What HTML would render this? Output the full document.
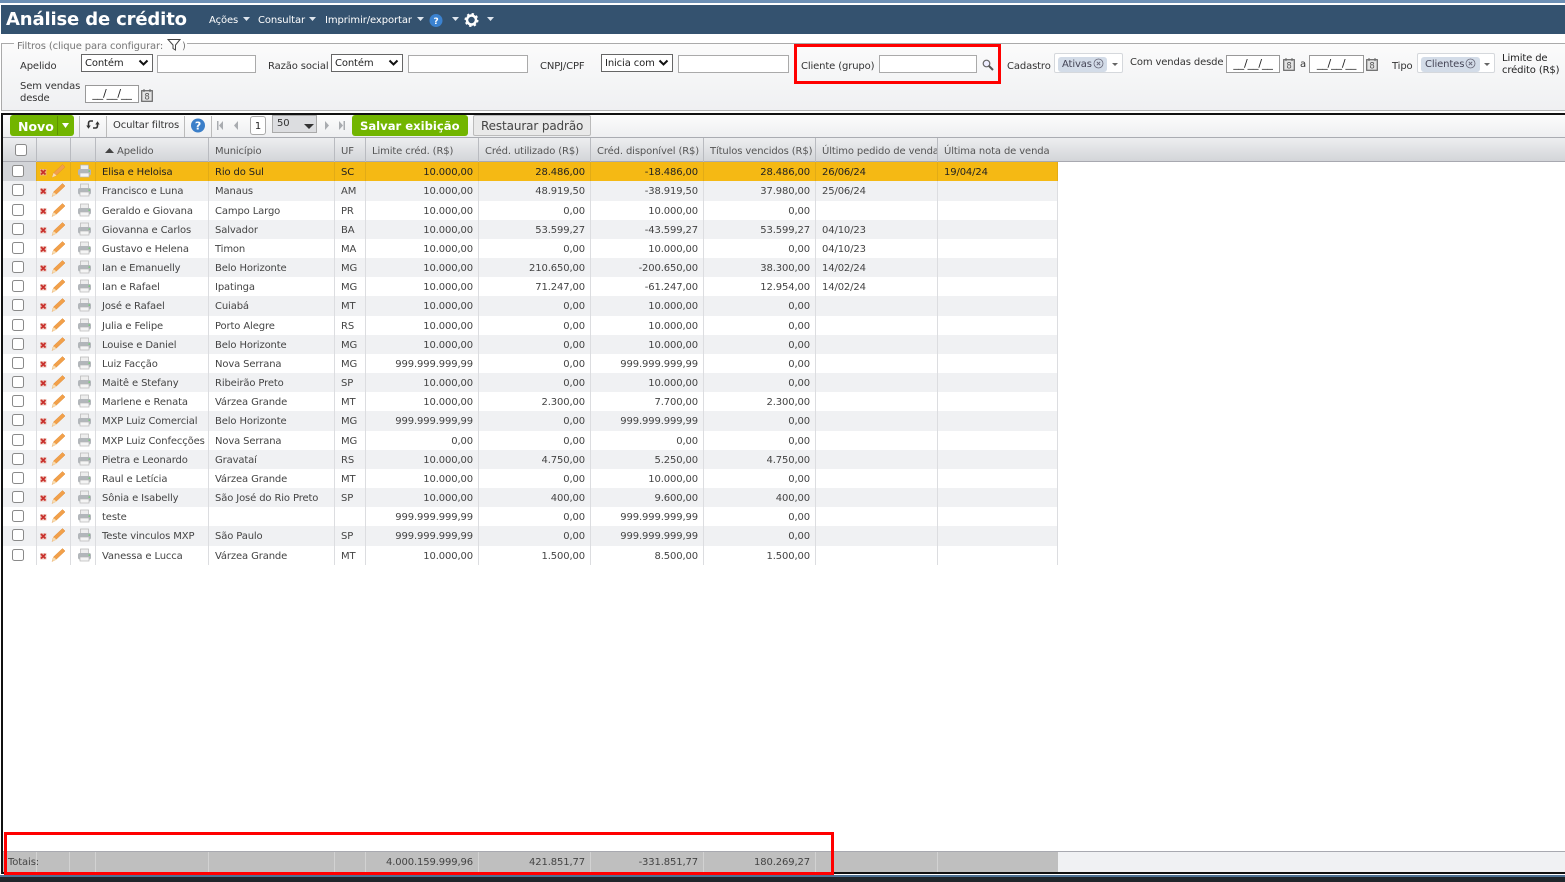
<!DOCTYPE html>
<html lang="pt"><head><meta charset="utf-8"><title>Análise de crédito</title>
<style>
*{box-sizing:border-box}
html,body{margin:0;padding:0;width:1565px;height:882px;overflow:hidden;background:#fff}
body{position:relative;font-family:"DejaVu Sans","Liberation Sans",sans-serif;font-size:10px;color:#444;letter-spacing:-.13px}
.a{position:absolute;white-space:nowrap}
.lb{position:absolute;white-space:nowrap;color:#333;line-height:12px}
.sel{position:absolute;height:18px;border:1px solid #666;background:#fff;color:#222;line-height:17px;padding-left:3px}
.inp{position:absolute;height:18px;background:#fff;border:1px solid #aaa}
.date{position:absolute;height:18px;background:#fff;border:1px solid #999;color:#222;line-height:15px;text-align:center;font-size:11px}
.chev{position:absolute;right:3px;top:4px}
.combo{position:absolute;top:53px;height:20px;background:#fff;border:1px solid #d5d8dc;border-radius:2px}
.chip{position:absolute;top:3px;height:15px;background:#d3dce8;border-radius:3px;color:#445;line-height:16px;padding-left:4px}
.vd{position:absolute;top:116px;width:1px;height:21px;background:#bbb}
.h{position:absolute;top:138px;height:24px;border-right:1px solid #b9bbc0;line-height:27px;padding-left:6px;color:#555;white-space:nowrap;overflow:hidden}
.r{position:absolute;left:3px;width:1055px;background:#f0f1f3;color:#444}
.r.w{background:#fff}
.r.s{background:#f5b914;color:#222}
.r span{position:absolute;top:0;height:100%;line-height:21px;white-space:nowrap;border-right:1px solid #dcdde0;overflow:hidden}
.r.s span{border-color:#e2ab16}
.k{left:0;width:34px;background:#f0f1f3}.s .k{background:#d2d4d8}.w .k{background:#fff}
.i1{left:34px;width:34px}.i2{left:68px;width:25px}
.ap{left:93px;width:113px;padding-left:6px}
.mu{left:206px;width:126px;padding-left:6px}
.uf{left:332px;width:31px;padding-left:6px}
.n1,.n2,.n3,.n4{text-align:right;padding-right:5px}
.n1{left:363px;width:113px}.n2{left:476px;width:112px}.n3{left:588px;width:113px}.n4{left:701px;width:112px}
.d1{left:813px;width:122px;padding-left:6px}.d2{left:935px;width:120px;padding-left:6px}
.r svg{position:absolute;left:0;top:0}
.t{position:absolute;top:852px;height:20px;border-right:1px solid #d2d2d2;line-height:22px;color:#444;text-align:right;padding-right:5px}
.box{position:absolute;border:3px solid #f00}
</style></head><body>
<svg width="0" height="0" style="position:absolute">
<symbol id="cb" viewBox="0 0 12 12"><rect x=".5" y=".5" width="11" height="11" rx="2" fill="#fff" stroke="#8a8a8a"/></symbol>
<symbol id="ed" viewBox="0 0 34 19"><rect x="3" y="7" width="6.500" height="6.500" fill="#e8b7a8" opacity=".7"/><path d="M4 8l4.500 4.500M8.500 8l-4.500 4.500" stroke="#c8302c" stroke-width="1.800"/><path d="M15 15.500l1.500-4.500 9-8.500 2.500 2.500-9 8.500z" fill="#f2a04a" stroke="#dd8a32" stroke-width=".5"/><path d="M15 15.500l1.500-4.500 3 2.500z" fill="#f7dcb0"/></symbol>
<symbol id="pr" viewBox="0 0 25 19"><rect x="9.500" y="3" width="8" height="5" fill="#eee" stroke="#b5b5b5" stroke-width=".7"/><rect x="7" y="7" width="13" height="6.500" rx="2" fill="#b2b6ba"/><rect x="9" y="11" width="9" height="4" fill="#f4f4f4" stroke="#b5b5b5" stroke-width=".7"/><rect x="17.500" y="8.500" width="1.500" height="1.200" fill="#6c6"/></symbol>
<symbol id="cal" viewBox="0 0 12 13"><rect x=".7" y="1.700" width="10.600" height="10.600" fill="#e4e4e4" stroke="#666" stroke-width="1.200"/><path d="M3 0v3M9 0v3" stroke="#666"/><text x="6" y="10.500" text-anchor="middle" font-size="8.500" fill="#555" font-family="DejaVu Sans">8</text></symbol>
</svg>

<!-- top -->
<div class="a" style="left:0;top:0;width:1565px;height:3px;background:#6c8fb4"></div>
<div class="a" style="left:1px;top:5px;width:1564px;height:29px;background:#34526f"></div>
<div class="a" style="left:6px;top:7px;font:bold 18px/25px 'DejaVu Sans',sans-serif;color:#fff;letter-spacing:-.15px">Análise de crédito</div>
<div class="a" style="left:209px;top:14px;color:#fff;line-height:13px;letter-spacing:-.1px">Ações</div>
<div class="a" style="left:258px;top:14px;color:#fff;line-height:13px;letter-spacing:-.1px">Consultar</div>
<div class="a" style="left:325px;top:14px;color:#fff;line-height:13px;letter-spacing:-.1px">Imprimir/exportar</div>
<svg class="a" style="left:200px;top:5px" width="310" height="29">
<g fill="#dfe6ee"><path d="M43 12h7l-3.500 4zM109 12h7l-3.500 4zM217 12h7l-3.500 4zM252 12h7l-3.500 4zM287 12h7l-3.500 4z"/></g>
<circle cx="236" cy="15.500" r="6.500" fill="#3b82d0"/><text x="236" y="19" text-anchor="middle" font-size="9" font-weight="bold" fill="#fff" font-family="DejaVu Sans">?</text>
<circle cx="271.500" cy="15" r="4.500" fill="none" stroke="#fff" stroke-width="2.500"/><circle cx="271.500" cy="15" r="6" fill="none" stroke="#fff" stroke-width="2" stroke-dasharray="2.300 2.400"/>
</svg>

<!-- filters -->
<div class="a" style="left:1px;top:43px;width:1564px;height:68px;background:linear-gradient(#fbfbfb,#eff0f2);border:1px solid #aaa;border-right:0;border-bottom:1px solid #b5b5b5"></div>
<div class="a" style="left:14px;top:38px;width:173px;height:11px;background:linear-gradient(#fff 5px,#fbfbfb 5px)"></div>
<div class="a" style="left:17px;top:40px;color:#777;line-height:13px">Filtros (clique para configurar:</div>
<svg class="a" style="left:167px;top:38px" width="14" height="13"><path d="M1 1.500h12L8.500 7v5L6 10.500V7z" fill="none" stroke="#444" stroke-width="1"/></svg>
<div class="a" style="left:182px;top:40px;color:#777;line-height:13px">)</div>

<div class="lb" style="left:20px;top:61px">Apelido</div>
<div class="sel" style="left:81px;top:54px;width:72px">Contém<svg class="chev" width="11" height="8"><path d="M1.500 1.500l4 4 4-4" fill="none" stroke="#111" stroke-width="2"/></svg></div>
<div class="inp" style="left:157px;top:55px;width:99px"></div>
<div class="lb" style="left:268px;top:61px">Razão social</div>
<div class="sel" style="left:331px;top:54px;width:72px">Contém<svg class="chev" width="11" height="8"><path d="M1.500 1.500l4 4 4-4" fill="none" stroke="#111" stroke-width="2"/></svg></div>
<div class="inp" style="left:408px;top:55px;width:120px"></div>
<div class="lb" style="left:540px;top:61px">CNPJ/CPF</div>
<div class="sel" style="left:601px;top:54px;width:72px">Inicia com<svg class="chev" width="11" height="8"><path d="M1.500 1.500l4 4 4-4" fill="none" stroke="#111" stroke-width="2"/></svg></div>
<div class="inp" style="left:678px;top:55px;width:111px"></div>
<div class="lb" style="left:801px;top:61px">Cliente (grupo)</div>
<div class="inp" style="left:879px;top:55px;width:98px"></div>
<svg class="a" style="left:982px;top:59px" width="12" height="12"><circle cx="4.500" cy="4.500" r="3.300" fill="#eef" stroke="#666" stroke-width="1.200"/><path d="M7 7l4 4" stroke="#555" stroke-width="2"/></svg>
<div class="lb" style="left:1007px;top:61px">Cadastro</div>
<div class="combo" style="left:1054px;width:69px"><div class="chip" style="left:3px;width:49px">Ativas</div>
<svg class="a" style="left:38px;top:4px" width="11" height="11"><circle cx="5.500" cy="5.500" r="4.500" fill="none" stroke="#667" stroke-width=".8"/><path d="M3.800 3.800l3.400 3.400M7.200 3.800l-3.400 3.400" stroke="#667"/></svg>
<svg class="a" style="left:56px;top:8px" width="8" height="5"><path d="M1 1h6L4 4z" fill="#666"/></svg></div>
<div class="lb" style="left:1130px;top:57px">Com vendas desde</div>
<div class="date" style="left:1226px;top:55px;width:54px">__/__/__</div>
<svg class="a" style="left:1283px;top:58px" width="12" height="13"><use href="#cal"/></svg>
<div class="lb" style="left:1300px;top:59px">a</div>
<div class="date" style="left:1309px;top:55px;width:55px">__/__/__</div>
<svg class="a" style="left:1366px;top:58px" width="12" height="13"><use href="#cal"/></svg>
<div class="lb" style="left:1392px;top:61px">Tipo</div>
<div class="combo" style="left:1417px;width:78px"><div class="chip" style="left:3px;width:59px">Clientes</div>
<svg class="a" style="left:47px;top:4px" width="11" height="11"><circle cx="5.500" cy="5.500" r="4.500" fill="none" stroke="#667" stroke-width=".8"/><path d="M3.800 3.800l3.400 3.400M7.200 3.800l-3.400 3.400" stroke="#667"/></svg>
<svg class="a" style="left:65px;top:8px" width="8" height="5"><path d="M1 1h6L4 4z" fill="#666"/></svg></div>
<div class="lb" style="left:1502px;top:53px;color:#222">Limite de<br>crédito (R$)</div>
<div class="lb" style="left:20px;top:81px">Sem vendas<br>desde</div>
<div class="date" style="left:85px;top:85px;width:54px">__/__/__</div>
<svg class="a" style="left:141px;top:89px" width="12" height="13"><use href="#cal"/></svg>

<!-- frame -->
<div class="a" style="left:1px;top:113px;width:1564px;height:2px;background:#111"></div>
<div class="a" style="left:1px;top:113px;width:2px;height:760px;background:#111"></div>

<!-- toolbar -->
<div class="a" style="left:3px;top:115px;width:1562px;height:23px;background:linear-gradient(#fcfcfc,#eeeff1);border-bottom:1px solid #aaacb2"></div>
<div class="a" style="left:10px;top:115px;width:64px;height:21px;background:#72b500;border-radius:3px;color:#fff;font:bold 12.500px/23px 'DejaVu Sans',sans-serif;padding-left:8px;letter-spacing:0">Novo</div>
<div class="a" style="left:57px;top:116px;width:1px;height:19px;background:#5d9400"></div>
<svg class="a" style="left:61px;top:122px" width="9" height="7"><path d="M1 1h7L4.500 6z" fill="#fff"/></svg>
<div class="vd" style="left:79px"></div>
<svg class="a" style="left:86px;top:119px" width="14" height="12"><path d="M7 2H4.500Q2.500 2 2.500 4.500V7M7 9h2.500q2 0 2-2.500V5" fill="none" stroke="#333" stroke-width="1.600"/><path d="M.3 6.500h4.400L2.500 9.800zM9.300 5.500h4.400L11.500 2.200z" fill="#333"/></svg>
<div class="vd" style="left:106px"></div>
<div class="a" style="left:113px;top:119px;color:#333;line-height:13px">Ocultar filtros</div>
<div class="vd" style="left:184px"></div>
<svg class="a" style="left:190px;top:118px" width="16" height="15"><circle cx="8" cy="7.500" r="7" fill="#3b7fc9"/><text x="8" y="11.500" text-anchor="middle" font-size="11" font-weight="bold" fill="#fff" font-family="DejaVu Sans">?</text></svg>
<div class="vd" style="left:211px"></div>
<svg class="a" style="left:215px;top:120px" width="130" height="11"><g fill="#a9acb0"><path d="M2 1h1.500v9H2zM8 1v9L4 5.500zM23 1v9l-4-4.500zM110 1v9l4-4.500zM124 1v9l4-4.500zM128.500 1h1.500v9h-1.500z"/></g></svg>
<div class="a" style="left:250px;top:116px;width:16px;height:19px;background:#fff;border:1px solid #aaa;border-radius:3px;text-align:center;line-height:19px;color:#222">1</div>
<div class="a" style="left:272px;top:115px;width:45px;height:18px;background:#dcdde0;border:1px solid #aaa;color:#333;line-height:16px;padding-left:4px">50<svg class="a" style="left:31px;top:8px" width="10" height="6"><path d="M0 0h10L5 5z" fill="#333"/></svg></div>
<div class="a" style="left:352px;top:115px;width:116px;height:21px;background:#72b500;border-radius:3px;color:#fff;font:bold 11.600px/22px 'DejaVu Sans',sans-serif;padding-left:8px;letter-spacing:0">Salvar exibição</div>
<div class="a" style="left:473px;top:115px;width:118px;height:21px;background:#e9e9e9;border:1px solid #bbb;border-radius:2px;color:#444;font-size:12px;line-height:20px;padding-left:7px">Restaurar padrão</div>

<!-- header -->
<div class="a" style="left:3px;top:138px;width:1562px;height:24px;background:linear-gradient(#edeef0,#d3d5d9);border-bottom:1px solid #a8a9b0"></div>
<div class="h" style="left:3px;width:34px"></div>
<div class="h" style="left:37px;width:34px"></div>
<div class="h" style="left:71px;width:25px"></div>
<div class="h" style="left:96px;width:113px;padding-left:21px">Apelido</div>
<div class="h" style="left:209px;width:126px">Município</div>
<div class="h" style="left:335px;width:31px">UF</div>
<div class="h" style="left:366px;width:113px">Limite créd. (R$)</div>
<div class="h" style="left:479px;width:112px">Créd. utilizado (R$)</div>
<div class="h" style="left:591px;width:113px">Créd. disponível (R$)</div>
<div class="h" style="left:704px;width:112px">Títulos vencidos (R$)</div>
<div class="h" style="left:816px;width:122px">Último pedido de venda</div>
<div class="h" style="left:938px;width:120px;border-right:0">Última nota de venda</div>
<svg class="a" style="left:15px;top:144px" width="12" height="12"><use href="#cb"/></svg>
<svg class="a" style="left:105px;top:148px" width="9" height="5"><path d="M0 5h9L4.500 0z" fill="#444"/></svg>

<!-- rows -->
<div class="r s" style="top:162px;height:19px"><span class="k"><svg style="left:9px;top:3px" width="12" height="12"><use href="#cb"/></svg></span><span class="i1"><svg width="34" height="19"><use href="#ed"/></svg></span><span class="i2"><svg width="25" height="19"><use href="#pr"/></svg></span><span class="ap">Elisa e Heloisa</span><span class="mu">Rio do Sul</span><span class="uf">SC</span><span class="n1">10.000,00</span><span class="n2">28.486,00</span><span class="n3">-18.486,00</span><span class="n4">28.486,00</span><span class="d1">26/06/24</span><span class="d2">19/04/24</span></div>
<div class="r" style="top:181px;height:20px"><span class="k"><svg style="left:9px;top:3px" width="12" height="12"><use href="#cb"/></svg></span><span class="i1"><svg width="34" height="19"><use href="#ed"/></svg></span><span class="i2"><svg width="25" height="19"><use href="#pr"/></svg></span><span class="ap">Francisco e Luna</span><span class="mu">Manaus</span><span class="uf">AM</span><span class="n1">10.000,00</span><span class="n2">48.919,50</span><span class="n3">-38.919,50</span><span class="n4">37.980,00</span><span class="d1">25/06/24</span><span class="d2"></span></div>
<div class="r w" style="top:201px;height:19px"><span class="k"><svg style="left:9px;top:3px" width="12" height="12"><use href="#cb"/></svg></span><span class="i1"><svg width="34" height="19"><use href="#ed"/></svg></span><span class="i2"><svg width="25" height="19"><use href="#pr"/></svg></span><span class="ap">Geraldo e Giovana</span><span class="mu">Campo Largo</span><span class="uf">PR</span><span class="n1">10.000,00</span><span class="n2">0,00</span><span class="n3">10.000,00</span><span class="n4">0,00</span><span class="d1"></span><span class="d2"></span></div>
<div class="r" style="top:220px;height:19px"><span class="k"><svg style="left:9px;top:3px" width="12" height="12"><use href="#cb"/></svg></span><span class="i1"><svg width="34" height="19"><use href="#ed"/></svg></span><span class="i2"><svg width="25" height="19"><use href="#pr"/></svg></span><span class="ap">Giovanna e Carlos</span><span class="mu">Salvador</span><span class="uf">BA</span><span class="n1">10.000,00</span><span class="n2">53.599,27</span><span class="n3">-43.599,27</span><span class="n4">53.599,27</span><span class="d1">04/10/23</span><span class="d2"></span></div>
<div class="r w" style="top:239px;height:19px"><span class="k"><svg style="left:9px;top:3px" width="12" height="12"><use href="#cb"/></svg></span><span class="i1"><svg width="34" height="19"><use href="#ed"/></svg></span><span class="i2"><svg width="25" height="19"><use href="#pr"/></svg></span><span class="ap">Gustavo e Helena</span><span class="mu">Timon</span><span class="uf">MA</span><span class="n1">10.000,00</span><span class="n2">0,00</span><span class="n3">10.000,00</span><span class="n4">0,00</span><span class="d1">04/10/23</span><span class="d2"></span></div>
<div class="r" style="top:258px;height:19px"><span class="k"><svg style="left:9px;top:3px" width="12" height="12"><use href="#cb"/></svg></span><span class="i1"><svg width="34" height="19"><use href="#ed"/></svg></span><span class="i2"><svg width="25" height="19"><use href="#pr"/></svg></span><span class="ap">Ian e Emanuelly</span><span class="mu">Belo Horizonte</span><span class="uf">MG</span><span class="n1">10.000,00</span><span class="n2">210.650,00</span><span class="n3">-200.650,00</span><span class="n4">38.300,00</span><span class="d1">14/02/24</span><span class="d2"></span></div>
<div class="r w" style="top:277px;height:19px"><span class="k"><svg style="left:9px;top:3px" width="12" height="12"><use href="#cb"/></svg></span><span class="i1"><svg width="34" height="19"><use href="#ed"/></svg></span><span class="i2"><svg width="25" height="19"><use href="#pr"/></svg></span><span class="ap">Ian e Rafael</span><span class="mu">Ipatinga</span><span class="uf">MG</span><span class="n1">10.000,00</span><span class="n2">71.247,00</span><span class="n3">-61.247,00</span><span class="n4">12.954,00</span><span class="d1">14/02/24</span><span class="d2"></span></div>
<div class="r" style="top:296px;height:20px"><span class="k"><svg style="left:9px;top:3px" width="12" height="12"><use href="#cb"/></svg></span><span class="i1"><svg width="34" height="19"><use href="#ed"/></svg></span><span class="i2"><svg width="25" height="19"><use href="#pr"/></svg></span><span class="ap">José e Rafael</span><span class="mu">Cuiabá</span><span class="uf">MT</span><span class="n1">10.000,00</span><span class="n2">0,00</span><span class="n3">10.000,00</span><span class="n4">0,00</span><span class="d1"></span><span class="d2"></span></div>
<div class="r w" style="top:316px;height:19px"><span class="k"><svg style="left:9px;top:3px" width="12" height="12"><use href="#cb"/></svg></span><span class="i1"><svg width="34" height="19"><use href="#ed"/></svg></span><span class="i2"><svg width="25" height="19"><use href="#pr"/></svg></span><span class="ap">Julia e Felipe</span><span class="mu">Porto Alegre</span><span class="uf">RS</span><span class="n1">10.000,00</span><span class="n2">0,00</span><span class="n3">10.000,00</span><span class="n4">0,00</span><span class="d1"></span><span class="d2"></span></div>
<div class="r" style="top:335px;height:19px"><span class="k"><svg style="left:9px;top:3px" width="12" height="12"><use href="#cb"/></svg></span><span class="i1"><svg width="34" height="19"><use href="#ed"/></svg></span><span class="i2"><svg width="25" height="19"><use href="#pr"/></svg></span><span class="ap">Louise e Daniel</span><span class="mu">Belo Horizonte</span><span class="uf">MG</span><span class="n1">10.000,00</span><span class="n2">0,00</span><span class="n3">10.000,00</span><span class="n4">0,00</span><span class="d1"></span><span class="d2"></span></div>
<div class="r w" style="top:354px;height:19px"><span class="k"><svg style="left:9px;top:3px" width="12" height="12"><use href="#cb"/></svg></span><span class="i1"><svg width="34" height="19"><use href="#ed"/></svg></span><span class="i2"><svg width="25" height="19"><use href="#pr"/></svg></span><span class="ap">Luiz Facção</span><span class="mu">Nova Serrana</span><span class="uf">MG</span><span class="n1">999.999.999,99</span><span class="n2">0,00</span><span class="n3">999.999.999,99</span><span class="n4">0,00</span><span class="d1"></span><span class="d2"></span></div>
<div class="r" style="top:373px;height:19px"><span class="k"><svg style="left:9px;top:3px" width="12" height="12"><use href="#cb"/></svg></span><span class="i1"><svg width="34" height="19"><use href="#ed"/></svg></span><span class="i2"><svg width="25" height="19"><use href="#pr"/></svg></span><span class="ap">Maitê e Stefany</span><span class="mu">Ribeirão Preto</span><span class="uf">SP</span><span class="n1">10.000,00</span><span class="n2">0,00</span><span class="n3">10.000,00</span><span class="n4">0,00</span><span class="d1"></span><span class="d2"></span></div>
<div class="r w" style="top:392px;height:19px"><span class="k"><svg style="left:9px;top:3px" width="12" height="12"><use href="#cb"/></svg></span><span class="i1"><svg width="34" height="19"><use href="#ed"/></svg></span><span class="i2"><svg width="25" height="19"><use href="#pr"/></svg></span><span class="ap">Marlene e Renata</span><span class="mu">Várzea Grande</span><span class="uf">MT</span><span class="n1">10.000,00</span><span class="n2">2.300,00</span><span class="n3">7.700,00</span><span class="n4">2.300,00</span><span class="d1"></span><span class="d2"></span></div>
<div class="r" style="top:411px;height:20px"><span class="k"><svg style="left:9px;top:3px" width="12" height="12"><use href="#cb"/></svg></span><span class="i1"><svg width="34" height="19"><use href="#ed"/></svg></span><span class="i2"><svg width="25" height="19"><use href="#pr"/></svg></span><span class="ap">MXP Luiz Comercial</span><span class="mu">Belo Horizonte</span><span class="uf">MG</span><span class="n1">999.999.999,99</span><span class="n2">0,00</span><span class="n3">999.999.999,99</span><span class="n4">0,00</span><span class="d1"></span><span class="d2"></span></div>
<div class="r w" style="top:431px;height:19px"><span class="k"><svg style="left:9px;top:3px" width="12" height="12"><use href="#cb"/></svg></span><span class="i1"><svg width="34" height="19"><use href="#ed"/></svg></span><span class="i2"><svg width="25" height="19"><use href="#pr"/></svg></span><span class="ap">MXP Luiz Confecções</span><span class="mu">Nova Serrana</span><span class="uf">MG</span><span class="n1">0,00</span><span class="n2">0,00</span><span class="n3">0,00</span><span class="n4">0,00</span><span class="d1"></span><span class="d2"></span></div>
<div class="r" style="top:450px;height:19px"><span class="k"><svg style="left:9px;top:3px" width="12" height="12"><use href="#cb"/></svg></span><span class="i1"><svg width="34" height="19"><use href="#ed"/></svg></span><span class="i2"><svg width="25" height="19"><use href="#pr"/></svg></span><span class="ap">Pietra e Leonardo</span><span class="mu">Gravataí</span><span class="uf">RS</span><span class="n1">10.000,00</span><span class="n2">4.750,00</span><span class="n3">5.250,00</span><span class="n4">4.750,00</span><span class="d1"></span><span class="d2"></span></div>
<div class="r w" style="top:469px;height:19px"><span class="k"><svg style="left:9px;top:3px" width="12" height="12"><use href="#cb"/></svg></span><span class="i1"><svg width="34" height="19"><use href="#ed"/></svg></span><span class="i2"><svg width="25" height="19"><use href="#pr"/></svg></span><span class="ap">Raul e Letícia</span><span class="mu">Várzea Grande</span><span class="uf">MT</span><span class="n1">10.000,00</span><span class="n2">0,00</span><span class="n3">10.000,00</span><span class="n4">0,00</span><span class="d1"></span><span class="d2"></span></div>
<div class="r" style="top:488px;height:19px"><span class="k"><svg style="left:9px;top:3px" width="12" height="12"><use href="#cb"/></svg></span><span class="i1"><svg width="34" height="19"><use href="#ed"/></svg></span><span class="i2"><svg width="25" height="19"><use href="#pr"/></svg></span><span class="ap">Sônia e Isabelly</span><span class="mu">São José do Rio Preto</span><span class="uf">SP</span><span class="n1">10.000,00</span><span class="n2">400,00</span><span class="n3">9.600,00</span><span class="n4">400,00</span><span class="d1"></span><span class="d2"></span></div>
<div class="r w" style="top:507px;height:19px"><span class="k"><svg style="left:9px;top:3px" width="12" height="12"><use href="#cb"/></svg></span><span class="i1"><svg width="34" height="19"><use href="#ed"/></svg></span><span class="i2"><svg width="25" height="19"><use href="#pr"/></svg></span><span class="ap">teste</span><span class="mu"></span><span class="uf"></span><span class="n1">999.999.999,99</span><span class="n2">0,00</span><span class="n3">999.999.999,99</span><span class="n4">0,00</span><span class="d1"></span><span class="d2"></span></div>
<div class="r" style="top:526px;height:20px"><span class="k"><svg style="left:9px;top:3px" width="12" height="12"><use href="#cb"/></svg></span><span class="i1"><svg width="34" height="19"><use href="#ed"/></svg></span><span class="i2"><svg width="25" height="19"><use href="#pr"/></svg></span><span class="ap">Teste vinculos MXP</span><span class="mu">São Paulo</span><span class="uf">SP</span><span class="n1">999.999.999,99</span><span class="n2">0,00</span><span class="n3">999.999.999,99</span><span class="n4">0,00</span><span class="d1"></span><span class="d2"></span></div>
<div class="r w" style="top:546px;height:19px"><span class="k"><svg style="left:9px;top:3px" width="12" height="12"><use href="#cb"/></svg></span><span class="i1"><svg width="34" height="19"><use href="#ed"/></svg></span><span class="i2"><svg width="25" height="19"><use href="#pr"/></svg></span><span class="ap">Vanessa e Lucca</span><span class="mu">Várzea Grande</span><span class="uf">MT</span><span class="n1">10.000,00</span><span class="n2">1.500,00</span><span class="n3">8.500,00</span><span class="n4">1.500,00</span><span class="d1"></span><span class="d2"></span></div>

<!-- totals -->
<div class="a" style="left:3px;top:851px;width:1562px;height:21px;background:#f0f1f3;border-top:1px solid #a8a9b0"></div>
<div class="a" style="left:3px;top:852px;width:1055px;height:20px;background:#bfbfbf"></div>
<div class="t" style="left:3px;width:34px;text-align:left;padding-left:5px;padding-right:0">Totais:</div>
<div class="t" style="left:37px;width:33px"></div>
<div class="t" style="left:70px;width:26px"></div>
<div class="t" style="left:96px;width:113px"></div>
<div class="t" style="left:209px;width:126px"></div>
<div class="t" style="left:335px;width:31px"></div>
<div class="t" style="left:366px;width:113px">4.000.159.999,96</div>
<div class="t" style="left:479px;width:112px">421.851,77</div>
<div class="t" style="left:591px;width:113px">-331.851,77</div>
<div class="t" style="left:704px;width:112px">180.269,27</div>
<div class="t" style="left:816px;width:122px"></div>
<div class="t" style="left:938px;width:120px;border-right:0"></div>

<!-- bottom -->
<div class="a" style="left:1px;top:872px;width:1564px;height:2px;background:#111"></div>
<div class="a" style="left:0;top:875px;width:1565px;height:2px;background:#4d7193"></div>
<div class="a" style="left:0;top:877px;width:1565px;height:5px;background:#20262b"></div>

<!-- annotations -->
<div class="box" style="left:794px;top:44px;width:207px;height:40px"></div>
<div class="box" style="left:4px;top:832px;width:830px;height:43px"></div>
</body></html>
